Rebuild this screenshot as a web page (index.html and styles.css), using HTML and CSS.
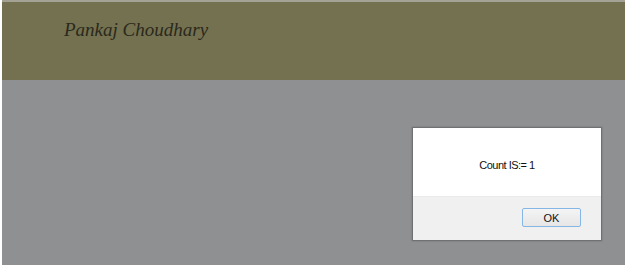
FILE: index.html
```html
<!DOCTYPE html>
<html lang="en">
<head>
    <meta charset="UTF-8">
    <title>Pankaj Choudhary</title>
    <link rel="stylesheet" href="styles.css">
</head>
<body>
    <div class="screen">
        <div class="header">
            <h1 class="name">Pankaj Choudhary</h1>
        </div>
        <div class="content">
            <div class="alert">
                <div class="alert-body">Count IS:= 1</div>
                <div class="alert-footer">
                    <button class="ok-btn">OK</button>
                </div>
            </div>
        </div>
    </div>
</body>
</html>
```

FILE: styles.css
```css
body {
    margin: 0;
    background-color: #ffffff;
    font-family: "Liberation Sans", Arial, sans-serif;
}

.screen {
    margin: 0 3px 4px 2px;
    height: 265px;
    display: flex;
    flex-direction: column;
    border-top: 2px solid #a3a294;
    box-sizing: border-box;
}

.header {
    height: 78px;
    background-color: #747150;
    padding-left: 62px;
    box-sizing: border-box;
}

.name {
    margin: 0;
    padding-top: 16px;
    font-family: "Liberation Serif", "Times New Roman", serif;
    font-style: italic;
    font-weight: normal;
    font-size: 19px;
    line-height: 23px;
    color: #2a291c;
}

.content {
    flex-grow: 1;
    background-color: #8f9092;
    display: flex;
    justify-content: flex-end;
    align-items: flex-start;
    padding: 47px 23px 0 0;
}

.alert {
    width: 190px;
    border: 1px solid #6f7071;
    box-sizing: border-box;
    background-color: #ffffff;
    box-shadow: 0 0 2px rgba(60, 60, 60, 0.3);
}

.alert-body {
    height: 68px;
    display: flex;
    align-items: center;
    justify-content: center;
    font-size: 11px;
    letter-spacing: -0.5px;
    color: #111111;
    padding-top: 5px;
    box-sizing: border-box;
}

.alert-footer {
    height: 44px;
    background-color: #f0f0f0;
    border-top: 1px solid #eaeaea;
    display: flex;
    justify-content: flex-end;
    align-items: flex-start;
    padding: 11px 20px 0 0;
    box-sizing: border-box;
}

.ok-btn {
    width: 59px;
    height: 19px;
    padding: 0;
    border: 1px solid #86b6e6;
    border-radius: 2px;
    background: linear-gradient(#f4f4f4, #e6e6e6);
    font-family: "Liberation Sans", Arial, sans-serif;
    font-size: 11px;
    color: #111111;
}
```
